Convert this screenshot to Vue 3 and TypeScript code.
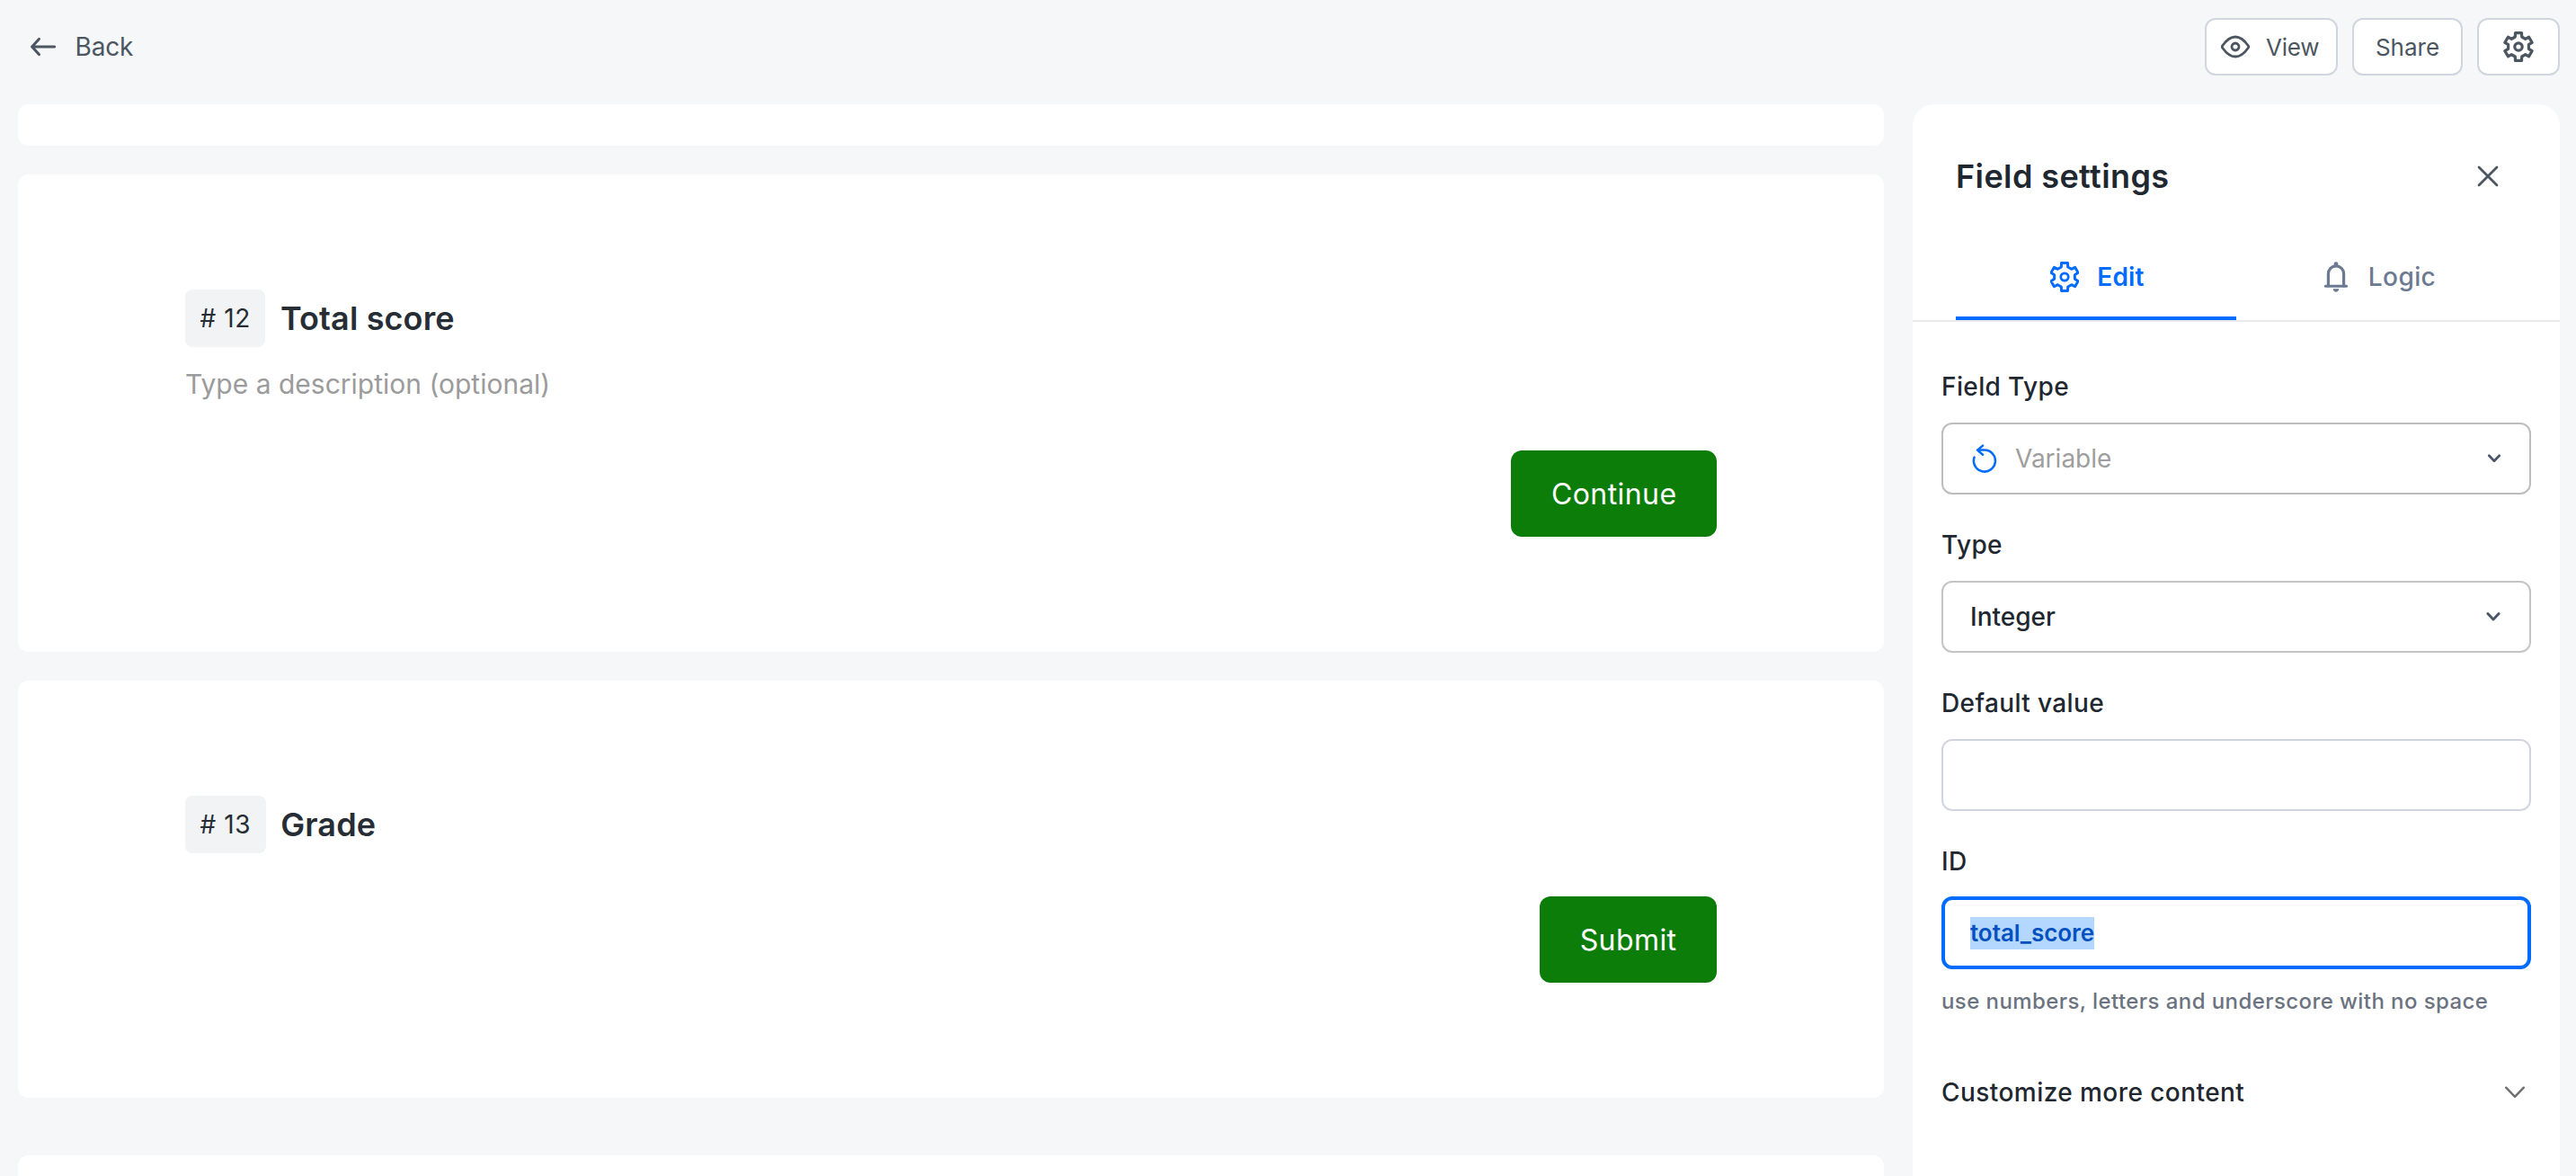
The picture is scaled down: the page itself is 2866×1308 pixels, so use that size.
<script setup lang="ts">
import { ref } from 'vue'

interface FormCard {
  number: number
  title: string
  description?: string
  action: string
}

const cards: FormCard[] = [
  { number: 12, title: 'Total score', description: 'Type a description (optional)', action: 'Continue' },
  { number: 13, title: 'Grade', action: 'Submit' },
]

const activeTab = ref<'edit' | 'logic'>('edit')

// Six-toothed cog outline, centred on the origin.
function cogPath(): string {
  const tooth: [number, number][] = [
    [-3.7, -11],
    [-3.5, -15.4],
    [3.5, -15.4],
    [3.7, -11],
  ]
  const points: string[] = []
  for (let i = 0; i < 6; i++) {
    const a = (i * Math.PI) / 3
    for (const [x, y] of tooth) {
      const px = x * Math.cos(a) - y * Math.sin(a)
      const py = x * Math.sin(a) + y * Math.cos(a)
      points.push(`${px.toFixed(2)} ${py.toFixed(2)}`)
    }
  }
  return `M${points.join('L')}Z`
}

const cog = cogPath()
</script>

<template>
  <div class="app">
    <header class="topbar">
      <a class="back">
        <svg class="icon" width="28" height="22" viewBox="0 0 28 22">
          <path d="M1.6 11H26.6M9.4 2.4L1.6 11L9.4 19.6" stroke-width="3" />
        </svg>
        <span>Back</span>
      </a>
      <div class="actions">
        <button class="btn view">
          <svg class="icon" width="32" height="26" viewBox="-16 -13 32 26">
            <path
              d="M-14.3-1.2C-10.6-6.4-6-11 0-11S10.6-6.4 14.3-1.2Q15 0 14.3 1.2C10.6 6.4 6 11 0 11S-10.6 6.4-14.3 1.2Q-15 0-14.3-1.2Z"
              stroke-width="2.8"
            />
            <circle r="4" stroke-width="2.8" />
          </svg>
          <span>View</span>
        </button>
        <button class="btn share">Share</button>
        <button class="btn gear">
          <svg class="icon" width="34" height="34" viewBox="-17 -17 34 34">
            <path :d="cog" stroke-width="3.2" />
            <circle r="4.2" stroke-width="3.2" />
          </svg>
        </button>
      </div>
    </header>

    <div class="body">
      <main class="canvas">
        <section class="card stub"></section>
        <section v-for="card in cards" :key="card.number" class="card">
          <div class="heading">
            <span class="badge"># {{ card.number }}</span>
            <h2>{{ card.title }}</h2>
          </div>
          <p v-if="card.description" class="description">{{ card.description }}</p>
          <button class="submit">{{ card.action }}</button>
        </section>
        <section class="card tail"></section>
      </main>

      <aside class="panel">
        <div class="panel-head">
          <h1>Field settings</h1>
          <svg class="icon" width="24" height="24" viewBox="-12 -12 24 24">
            <path d="M-10-10L10 10M10-10L-10 10" stroke-width="2.8" />
          </svg>
        </div>

        <nav class="tabs">
          <a class="tab" :class="{ active: activeTab === 'edit' }" @click="activeTab = 'edit'">
            <svg class="icon" width="32" height="34" viewBox="-16 -17 32 34">
              <path :d="cog" stroke-width="3" />
              <circle r="4.2" stroke-width="2.8" />
            </svg>
            <span>Edit</span>
          </a>
          <a class="tab logic" :class="{ active: activeTab === 'logic' }" @click="activeTab = 'logic'">
            <svg class="icon" width="32" height="34" viewBox="-16 0 32 34">
              <path d="M-8.6 27V13.8C-8.6 8.6-4.8 4.9 0 4.9S8.6 8.6 8.6 13.8V27" stroke-width="3.2" />
              <path d="M-11.6 27.3H11.6" stroke-width="3" />
              <path class="solid" d="M-2.4 5V2.7A2.4 2.4 0 0 1 2.4 2.7V5Z" />
              <path class="solid" d="M-3.4 30.3H3.4C3 32.6 1.6 33.8 0 33.8S-3 32.6-3.4 30.3Z" />
            </svg>
            <span>Logic</span>
          </a>
        </nav>

        <div class="form">
          <label>Field Type</label>
          <div class="control select disabled">
            <svg class="icon refresh" width="28" height="34" viewBox="0 0 28 34">
              <path d="M2.6 15.6A12 12 0 1 0 13.6 7.6L6 7.6M12 2.6L6 7.6L12 12.8" stroke-width="2.5" />
            </svg>
            <span class="value">Variable</span>
            <svg class="icon chevron" width="16" height="12" viewBox="0 0 16 12">
              <path d="M2.3 2.8L8 8.7L13.7 2.8" stroke-width="2.7" />
            </svg>
          </div>

          <label>Type</label>
          <div class="control select second">
            <span class="value">Integer</span>
            <svg class="icon chevron" width="16" height="12" viewBox="0 0 16 12">
              <path d="M1.9 2.6L8 8.9L14.1 2.6" stroke-width="2.9" />
            </svg>
          </div>

          <label>Default value</label>
          <div class="control plain"></div>

          <label>ID</label>
          <div class="control focused"><span class="selected">total_score</span></div>
          <p class="hint">use numbers, letters and underscore with no space</p>

          <div class="more">
            <span>Customize more content</span>
            <svg class="icon" width="22" height="14" viewBox="0 0 22 14">
              <path d="M1.2 1.7L11 11.8L20.8 1.7" stroke-width="2.4" />
            </svg>
          </div>
        </div>
      </aside>
    </div>
  </div>
</template>

<style>
body {
  margin: 0;
  background: #f5f7f9;
}
</style>

<style scoped>
.app {
  width: 2866px;
  height: 1308px;
  overflow: hidden;
  background: #f5f7f9;
  font-family: Inter, 'Liberation Sans', sans-serif;
  color: #1f2730;
}
.app * {
  box-sizing: border-box;
}
h1,
h2,
p {
  margin: 0;
}
button {
  font: inherit;
  color: inherit;
  padding: 0;
}
.icon {
  display: block;
  flex: none;
  fill: none;
  stroke: currentColor;
  stroke-linecap: round;
  stroke-linejoin: round;
}
.icon .solid {
  fill: currentColor;
  stroke: none;
}

.topbar {
  height: 116px;
  padding: 20px 18px 32px 34px;
  display: flex;
  justify-content: space-between;
  color: #4b5661;
}
.back {
  height: 64px;
  display: flex;
  align-items: center;
  gap: 21.5px;
  font-size: 28px;
  letter-spacing: -0.15px;
}
.actions {
  display: flex;
  gap: 16px;
}
.btn {
  height: 64px;
  display: flex;
  align-items: center;
  justify-content: center;
  background: #fff;
  border: 2px solid #cfd6de;
  border-radius: 12px;
  font-size: 26px;
}
.view {
  width: 148px;
  justify-content: flex-start;
  padding-left: 16px;
  gap: 18px;
  letter-spacing: -0.2px;
}
.share {
  width: 123px;
}
.gear {
  width: 92px;
}

.body {
  height: 1192px;
  padding: 0 18px 0 20px;
  display: flex;
  gap: 32px;
}
.canvas {
  width: 2076px;
  display: flex;
  flex-direction: column;
  gap: 32px;
}
.card {
  flex: none;
  background: #fff;
  border-radius: 12px;
  padding: 128px 186px;
  display: flex;
  flex-direction: column;
}
.stub {
  height: 46px;
  padding: 0;
}
.tail {
  height: 120px;
  padding: 0;
  margin-top: 32px;
}
.heading {
  height: 64px;
  display: flex;
  align-items: center;
  gap: 16.5px;
}
.badge {
  height: 64px;
  line-height: 64px;
  padding: 0 16.5px;
  border-radius: 8px;
  background: #f2f3f5;
  color: #262d35;
  font-size: 28px;
  letter-spacing: 0.6px;
}
h2 {
  font-size: 36px;
  font-weight: 600;
  line-height: 44px;
  letter-spacing: 0.12px;
  color: #262d35;
}
.description {
  margin: 20px 0 5px;
  font-size: 30px;
  line-height: 42px;
  color: #9b9b9b;
}
.submit {
  align-self: flex-end;
  height: 96px;
  margin-top: 48px;
  padding: 0 44.5px;
  border: 0;
  border-radius: 12px;
  background: #0d7d0a;
  color: #fff;
  font-size: 32px;
  letter-spacing: 0.42px;
}

.panel {
  width: 720px;
  background: #fff;
  border-radius: 24px 24px 0 0;
}
.panel-head {
  height: 160px;
  padding: 0 68px 0 48px;
  display: flex;
  align-items: center;
  justify-content: space-between;
}
.panel-head .icon {
  color: #4b5661;
}
h1 {
  font-size: 36px;
  font-weight: 600;
  line-height: 44px;
  letter-spacing: 0.4px;
}
.tabs {
  display: flex;
  height: 82px;
  padding: 0 48px;
  border-bottom: 2px solid #e9eaee;
}
.tab {
  width: 312px;
  height: 80px;
  padding: 0 0 12px 3px;
  display: flex;
  align-items: center;
  justify-content: center;
  gap: 20px;
  border-bottom: 4px solid transparent;
  font-size: 28px;
  font-weight: 500;
  letter-spacing: 0.4px;
  color: #6b7a90;
}
.tab.logic {
  padding-left: 5px;
}
.tab.active {
  color: #006bff;
  border-color: #006bff;
  font-weight: 600;
  letter-spacing: 0.2px;
}

.form {
  padding: 52px 32px 0;
  display: flex;
  flex-direction: column;
}
label {
  font-size: 28px;
  font-weight: 500;
  line-height: 40px;
  letter-spacing: 0.38px;
  margin-bottom: 20px;
}
.control {
  height: 80px;
  margin-bottom: 36px;
  padding: 0 32px 0 30px;
  display: flex;
  align-items: center;
  border: 2px solid #bdbdbd;
  border-radius: 12px;
  font-size: 28px;
}
.control .value {
  flex: 1;
}
.chevron {
  color: #4b5568;
}
.disabled {
  padding-right: 31px;
  color: #9e9e9e;
}
.refresh {
  margin: 0 20px 0 2px;
  color: #006bff;
}
.second {
  border-color: #c4c4c4;
  font-weight: 500;
}
.plain {
  border-color: #d1d5de;
}
.focused {
  height: 81px;
  margin: -1px 0 0;
  padding: 0 28px;
  border: 4px solid #006bff;
}
.selected {
  height: 36px;
  line-height: 36px;
  background: #b3d7ff;
  color: #0550c0;
  font-size: 26px;
  font-weight: 600;
  letter-spacing: -0.06px;
}
.hint {
  margin-top: 20px;
  font-size: 24px;
  font-weight: 500;
  line-height: 32px;
  letter-spacing: 0.42px;
  color: #6b7380;
}
.more {
  margin-top: 65px;
  height: 40px;
  padding-right: 7px;
  display: flex;
  align-items: center;
  justify-content: space-between;
  font-size: 28px;
  font-weight: 500;
  letter-spacing: 0.44px;
}
.more .icon {
  color: #6e6e6e;
}
</style>
